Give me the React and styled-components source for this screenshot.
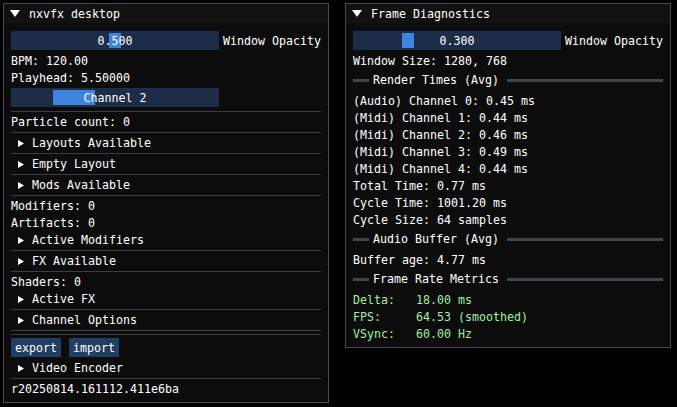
import styled, { createGlobalStyle } from 'styled-components';

const Global = createGlobalStyle`
  body {
    margin: 0;
    background: #000;
    font-family: "DejaVu Sans Mono", "Liberation Mono", monospace;
    font-size: 11.63px;
    line-height: 13px;
    color: #fff;
  }
`;

const Desktop = styled.div`
  display: flex;
  align-items: flex-start;
  gap: 16px;
  padding: 3px;
  width: 677px;
  height: 407px;
  box-sizing: border-box;
`;

const Window = styled.div`
  width: 326px;
  box-sizing: border-box;
  border: 1px solid #4a4a52;
  background: #0c0c0c;
`;

const TitleBar = styled.div`
  height: 19px;
  box-sizing: border-box;
  padding: 2px 0 0 6px;
  display: flex;
  align-items: center;
  gap: 9px;
  background: #111111;
  white-space: pre;

  svg {
    margin-top: -2px;
  }
`;

const Body = styled.div`
  display: flex;
  flex-direction: column;
  gap: 4px;
  padding: 8px 7px 7px 7px;
`;

/* line box taller than the 13px row pushes glyphs down to sit like the bitmap font */
const Line = styled.div`
  height: 13px;
  line-height: 15px;
  white-space: pre;
  color: ${p => p.$color || '#fff'};
`;

const Separator = styled.div`
  height: 1px;
  margin-bottom: -1px;
  background: #3d3d45;
`;

const SliderRow = styled.div`
  display: flex;
  align-items: flex-start;
  gap: 4px;
  height: 19px;
  line-height: 21px;
`;

const SliderFrame = styled.div`
  position: relative;
  width: 208px;
  height: 19px;
  background: #1d2d48;
  display: flex;
  justify-content: center;
`;

const Grab = styled.div`
  position: absolute;
  top: 2px;
  bottom: 2px;
  left: ${p => p.$left}px;
  width: ${p => p.$width}px;
  background: #3d84de;
`;

const SliderText = styled.span`
  position: relative;
  white-space: pre;
`;

const TreeRow = styled.div`
  height: 13px;
  line-height: 15px;
  display: flex;
  align-items: flex-start;
  padding-left: 7px;
  gap: 8px;
  white-space: pre;

  svg {
    margin-top: 4px;
  }
`;

const SepText = styled.div`
  height: 19px;
  line-height: 21px;
  display: flex;
  align-items: center;
`;

const SepLine = styled.div`
  height: 3px;
  background: #43434c;
  width: ${p => (p.$grow ? 'auto' : '16px')};
  flex: ${p => (p.$grow ? 1 : 'none')};
  margin: ${p => (p.$grow ? '0 0 0 8px' : '0 4px 0 0')};
`;

const ButtonRow = styled.div`
  display: flex;
  gap: 8px;
  height: 19px;
`;

const Button = styled.div`
  height: 19px;
  line-height: 21px;
  padding: 0 4px;
  background: #213e64;
`;

const DownArrow = () => (
  <svg width="10" height="7" viewBox="0 0 10 7">
    <polygon points="0,0 10,0 5,7" fill="#fff" />
  </svg>
);

const RightArrow = () => (
  <svg width="6" height="7" viewBox="0 0 6 7">
    <polygon points="0,0 6,3.5 0,7" fill="#fff" />
  </svg>
);

function Slider({ text, grabLeft, grabWidth, label }) {
  return (
    <SliderRow>
      <SliderFrame>
        <Grab $left={grabLeft} $width={grabWidth} />
        <SliderText>{text}</SliderText>
      </SliderFrame>
      {label && <span>{label}</span>}
    </SliderRow>
  );
}

function Tree({ children }) {
  return (
    <TreeRow>
      <RightArrow />
      <span>{children}</span>
    </TreeRow>
  );
}

function Heading({ children }) {
  return (
    <SepText>
      <SepLine />
      <span>{children}</span>
      <SepLine $grow />
    </SepText>
  );
}

const green = '#a3eea3';

export default function App() {
  return (
    <>
      <Global />
      <Desktop>
        <Window>
          <TitleBar>
            <DownArrow />
            <span>nxvfx desktop</span>
          </TitleBar>
          <Body>
            <Slider text="0.500" grabLeft={98} grabWidth={12} label="Window Opacity" />
            <Line>BPM: 120.00</Line>
            <Line>Playhead: 5.50000</Line>
            <Slider text="Channel 2" grabLeft={42} grabWidth={42} />
            <Separator />
            <Line>Particle count: 0</Line>
            <Separator />
            <Tree>Layouts Available</Tree>
            <Separator />
            <Tree>Empty Layout</Tree>
            <Separator />
            <Tree>Mods Available</Tree>
            <Separator />
            <Line>Modifiers: 0</Line>
            <Line>Artifacts: 0</Line>
            <Tree>Active Modifiers</Tree>
            <Separator />
            <Tree>FX Available</Tree>
            <Separator />
            <Line>Shaders: 0</Line>
            <Tree>Active FX</Tree>
            <Separator />
            <Tree>Channel Options</Tree>
            <Separator />
            <Separator />
            <ButtonRow>
              <Button>export</Button>
              <Button>import</Button>
            </ButtonRow>
            <Tree>Video Encoder</Tree>
            <Separator />
            <Line>r20250814.161112.411e6ba</Line>
          </Body>
        </Window>

        <Window>
          <TitleBar>
            <DownArrow />
            <span>Frame Diagnostics</span>
          </TitleBar>
          <Body>
            <Slider text="0.300" grabLeft={49} grabWidth={12} label="Window Opacity" />
            <Line>Window Size: 1280, 768</Line>
            <Heading>Render Times (Avg)</Heading>
            <Line>(Audio) Channel 0: 0.45 ms</Line>
            <Line>(Midi) Channel 1: 0.44 ms</Line>
            <Line>(Midi) Channel 2: 0.46 ms</Line>
            <Line>(Midi) Channel 3: 0.49 ms</Line>
            <Line>(Midi) Channel 4: 0.44 ms</Line>
            <Line>Total Time: 0.77 ms</Line>
            <Line>Cycle Time: 1001.20 ms</Line>
            <Line>Cycle Size: 64 samples</Line>
            <Heading>Audio Buffer (Avg)</Heading>
            <Line>Buffer age: 4.77 ms</Line>
            <Heading>Frame Rate Metrics</Heading>
            <Line $color={green}>{'Delta:   18.00 ms'}</Line>
            <Line $color={green}>{'FPS:     64.53 (smoothed)'}</Line>
            <Line $color={green}>{'VSync:   60.00 Hz'}</Line>
          </Body>
        </Window>
      </Desktop>
    </>
  );
}
